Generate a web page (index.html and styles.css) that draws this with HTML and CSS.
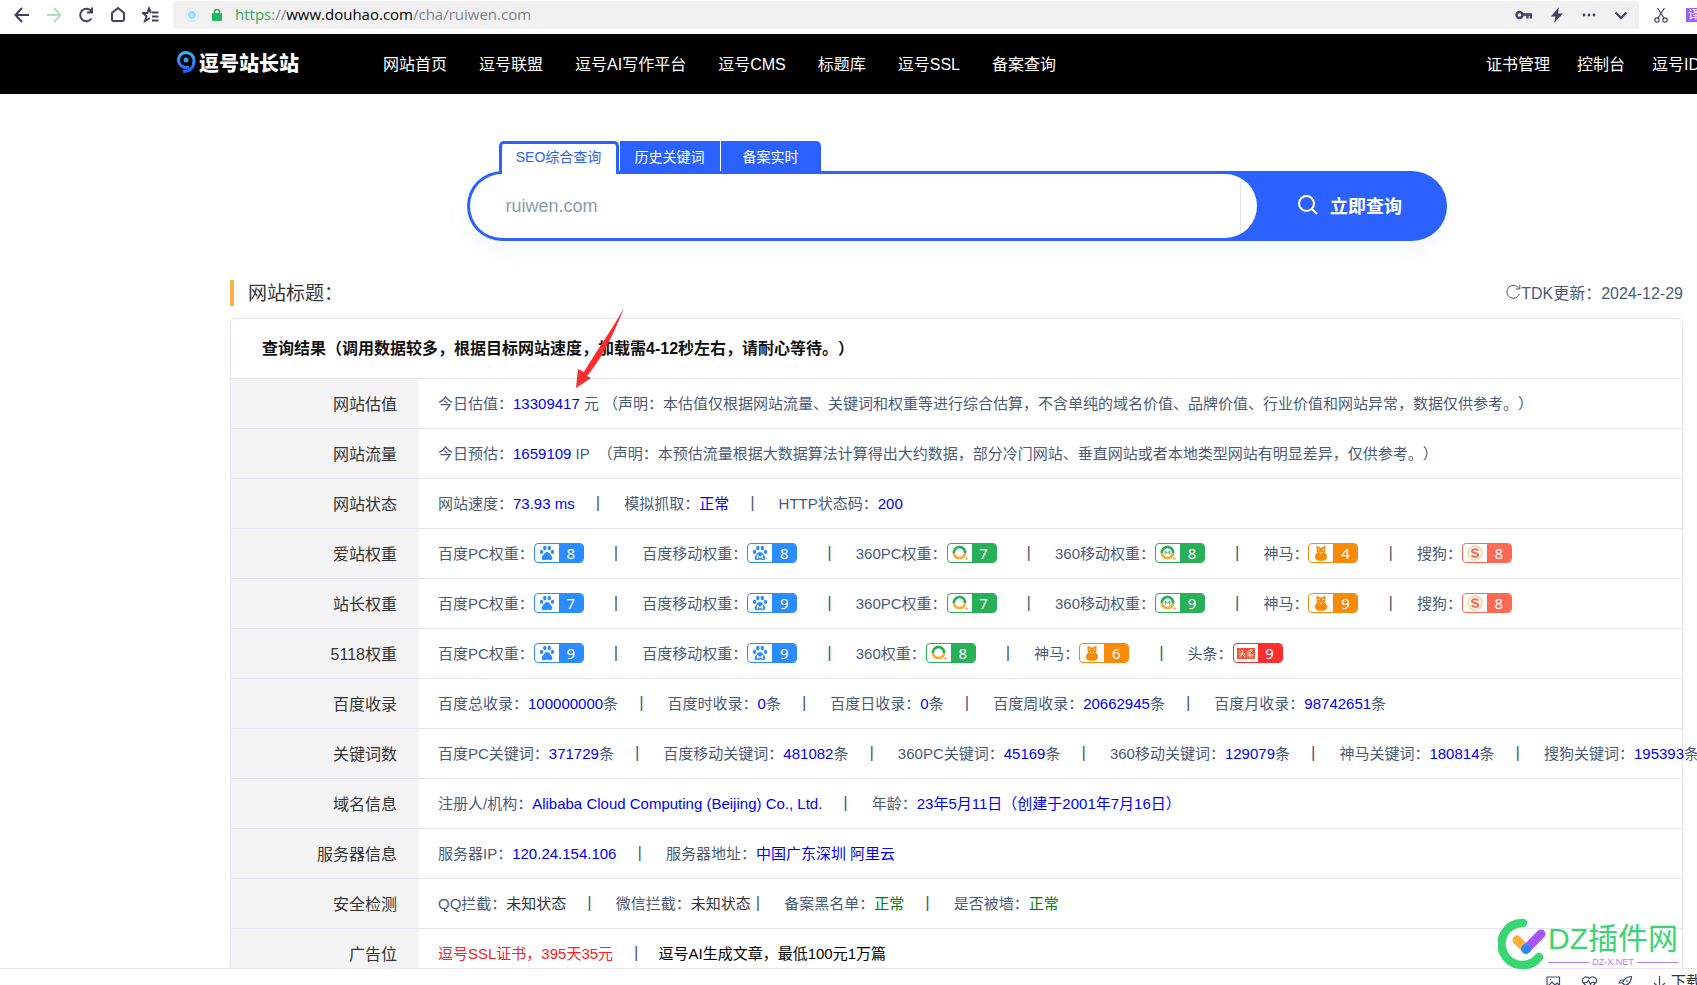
FILE: index.html
```html
<!DOCTYPE html>
<html lang="zh-CN">
<head>
<meta charset="utf-8">
<title>ruiwen.com - 逗号站长站</title>
<link rel="stylesheet" href="styles.css">
</head>
<body>
<svg class="defs" aria-hidden="true">
  <symbol id="paw" viewBox="0 0 16 16"><ellipse cx="2.6" cy="6.9" rx="1.7" ry="2.1"/><ellipse cx="5.8" cy="3.1" rx="1.7" ry="2.4"/><ellipse cx="10.3" cy="3.1" rx="1.7" ry="2.4"/><ellipse cx="13.5" cy="6.9" rx="1.7" ry="2.1"/><path d="M8 7c2 0 2.6 1.800 4 3.200 2.400 2.300 1.300 5-1 5-1.200 0-1.800-.4-3-.4s-1.800.4-3 .4c-2.300 0-3.400-2.700-1-5C5.400 8.800 6 7 8 7z"/></symbol>
  <symbol id="pawm" viewBox="0 0 16 16"><use href="#paw"/><path d="M5.500 14v-3.200l2.500 2 2.500-2V14" fill="none" stroke="#fff" stroke-width="1.200"/></symbol>
  <symbol id="so" viewBox="0 0 16 16"><path d="M2 8.500A5.600 5.600 0 1 1 13 8.500" fill="none" stroke="#27b058" stroke-width="2.600"/><path d="M2 8.500A5.600 5.600 0 0 0 13 8.500" fill="none" stroke="#f9ab3c" stroke-width="2.600"/><circle cx="14.500" cy="13.500" r="1.200" fill="#f9ab3c"/></symbol>
  <symbol id="som" viewBox="0 0 16 16"><use href="#so"/><path d="M5.300 9.500V6L7.500 8.200 9.700 6v3.500" fill="none" stroke="#27b058" stroke-width="1"/></symbol>
  <symbol id="owl" viewBox="0 0 16 16"><path d="M3.500.5 7 2.500h2L12.500.5V5c0 1-.5 2-1.300 2.500 2 1 2.800 2.500 2.800 4.200 0 2-1.500 3.800-3.500 4H5.500c-2-.2-3.500-2-3.500-4C2 10 2.800 8.500 4.800 7.500 4 7 3.500 6 3.500 5z"/><path d="m4.800 4 2 1M11.200 4l-2 1M6.500 7.500 8 8.800l1.500-1.300" stroke="#fff" fill="none"/></symbol>
  <symbol id="sogou" viewBox="0 0 16 16"><circle cx="8" cy="8" r="7" fill="none" stroke="#fbd9ac" stroke-width="1.800"/><path d="M11.400 5.600C10.500 4 5 3.600 5 6.200c0 2.300 6.200 1.200 6.200 3.700 0 2.600-5.700 2.200-6.600.4" fill="none" stroke="#fb6a55" stroke-width="2"/></symbol>
  <symbol id="toutiao" viewBox="0 0 18 16"><path d="M0 3h18v11H0z" fill="#f5533d"/><path d="M2 6l1.500 1M1.800 9h6.500M5.500 5v4l-3 3M6 10l2 2M10.500 7l2-2h3l-2.500 3H10M10 10h6.500M13 8.500V13M11 11.500l-1 1M15 11.500l1 1" stroke="#ffe9cf" fill="none"/></symbol>
</svg>

<div class="toolbar">
  <div class="tools">
    <svg width="16" height="18" viewBox="0 0 16 18"><path d="M15 9H2M8 2 1.500 9 8 16"/></svg>
    <svg class="muted" width="16" height="18" viewBox="0 0 16 18"><path d="M1 9h13M8 2l6.500 7L8 16"/></svg>
    <svg width="16" height="18" viewBox="0 0 16 18"><path d="M13.500 12.500A6.200 6.200 0 1 1 13.300 5.200M14 1.500v5H9"/></svg>
    <svg width="16" height="18" viewBox="0 0 16 18"><path d="M2 13.500V7L8 2l6 5v6.500a1.500 1.500 0 0 1-1.500 1.500h-9A1.500 1.500 0 0 1 2 13.500z"/></svg>
    <svg width="17" height="18" viewBox="0 0 17 18"><path d="M10 6.500h6.500M10 10.500h6.500M10 14.500h6.500"/><path d="M9 7 7 2.500 5.300 7H1l3.500 3.300L3 15l5-3"/></svg>
  </div>
  <div class="address">
    <svg class="plain" width="14" height="16" viewBox="0 0 14 16"><circle cx="7" cy="8" r="6" fill="none" stroke="#c3e8fc" stroke-width="1" stroke-dasharray="5 1"/><circle cx="7" cy="8" r="4" fill="#a6dcfc"/></svg>
    <svg class="plain" width="12" height="14" viewBox="0 0 12 14"><path d="M3.500 6V4a2.500 2.500 0 0 1 5 0v2" fill="none" stroke="#21b65b" stroke-width="1.500"/><rect x="1" y="5" width="10" height="8" rx="1" fill="#21b65b"/></svg>
    <div class="url"><span class="scheme">https</span>://<b>www.douhao.com</b>/cha/ruiwen.com</div>
    <div class="address-icons">
      <svg width="17" height="16" viewBox="0 0 17 16"><g stroke-width="2.400"><circle cx="4.500" cy="8" r="3"/><path d="M8 7.500h8v4M12.500 8v3.500"/></g></svg>
      <svg width="14" height="18" viewBox="0 0 14 18"><path d="M9 1 1 10.500h4.500L4 17l9-9.500H8z" fill="#3f4065" stroke="none"/></svg>
      <svg width="14" height="16" viewBox="0 0 14 16"><g fill="#3f4065" stroke="none"><circle cx="2" cy="8" r="1.400"/><circle cx="7" cy="8" r="1.400"/><circle cx="12" cy="8" r="1.400"/></g></svg>
      <svg width="14" height="16" viewBox="0 0 14 16"><path d="m1.500 5.500 5.500 5.500 5.500-5.500"/></svg>
    </div>
  </div>
  <div class="extras">
    <svg width="16" height="18" viewBox="0 0 16 18"><g stroke-width="1.200"><circle cx="4" cy="14" r="2.200"/><circle cx="12" cy="14" r="2.200"/><path d="M5 12 11.500 2M11 12 4.500 2"/></g></svg>
    <span class="translate">译</span>
  </div>
</div>

<header class="site-header">
  <a class="logo" href="#">
    <svg width="19" height="23" viewBox="0 0 19 23"><defs><linearGradient id="lg" x1="0" y1="0" x2="0" y2="1"><stop offset="0" stop-color="#37b6f5"/><stop offset="1" stop-color="#2a5cff"/></linearGradient></defs><path d="M9 1.500a7.500 7.500 0 1 0 3 14.400M9 1.500a8 8 0 0 1 8 8c0 7-4 11-11 11" fill="none" stroke="url(#lg)" stroke-width="3"/><circle cx="9" cy="9" r="2.500" fill="#2fa1fa"/></svg>
    <span>逗号站长站</span>
  </a>
  <nav class="nav">
    <a href="#">网站首页</a><a href="#">逗号联盟</a><a href="#">逗号AI写作平台</a><a href="#">逗号CMS</a><a href="#">标题库</a><a href="#">逗号SSL</a><a href="#">备案查询</a>
  </nav>
  <nav class="account"><a href="#">证书管理</a><a href="#">控制台</a><a href="#">逗号ID</a></nav>
</header>

<main class="main">
  <form class="search">
    <div class="tabs">
      <button type="button" class="tab active">SEO综合查询</button><button type="button" class="tab">历史关键词</button><button type="button" class="tab">备案实时</button>
    </div>
    <div class="search-box">
      <div class="field"><input type="text" value="ruiwen.com" aria-label="域名"></div>
      <button type="submit" class="submit"><svg width="20" height="20" viewBox="0 0 20 20"><circle cx="8.500" cy="8.500" r="7.500" fill="none" stroke="#fff" stroke-width="2"/><path d="m14 14 5 5" stroke="#fff" stroke-width="2"/></svg>立即查询</button>
    </div>
  </form>

  <div class="title-row">
    <h1>网站标题：</h1>
    <div class="updated"><svg width="15" height="16" viewBox="0 0 15 16"><path d="M13.500 10A6.500 6.500 0 1 1 13 4.500M13.800 1v4H10" fill="none" stroke="#4a5b78"/></svg>TDK更新：2024-12-29</div>
  </div>

  <section class="result">
    <h2>查询结果（调用数据较多，根据目标网站速度，加载需4-12秒左右，请耐心等待。）</h2>
    <table>
      <tr><th scope="row">网站估值</th><td><div class="line"><span>今日估值：<b>13309417</b> 元 （声明：本估值仅根据网站流量、关键词和权重等进行综合估算，不含单纯的域名价值、品牌价值、行业价值和网站异常，数据仅供参考。）</span></div></td></tr>
      <tr><th scope="row">网站流量</th><td><div class="line"><span>今日预估：<b>1659109</b> IP &nbsp;（声明：本预估流量根据大数据算法计算得出大约数据，部分冷门网站、垂直网站或者本地类型网站有明显差异，仅供参考。）</span></div></td></tr>
      <tr><th scope="row">网站状态</th><td><div class="line"><span>网站速度：<b>73.93 ms</b></span><i>|</i><span>模拟抓取：<b>正常</b></span><i>|</i><span>HTTP状态码：<b>200</b></span></div></td></tr>
      <tr><th scope="row">爱站权重</th><td><div class="line ranks"><span>百度PC权重：</span><span class="badge blue"><svg><use href="#paw"/></svg><em>8</em></span><i>|</i><span>百度移动权重：</span><span class="badge blue"><svg><use href="#pawm"/></svg><em>8</em></span><i>|</i><span>360PC权重：</span><span class="badge green"><svg><use href="#so"/></svg><em>7</em></span><i>|</i><span>360移动权重：</span><span class="badge green"><svg><use href="#som"/></svg><em>8</em></span><i>|</i><span>神马：</span><span class="badge orange"><svg><use href="#owl"/></svg><em>4</em></span><i>|</i><span>搜狗：</span><span class="badge coral"><svg><use href="#sogou"/></svg><em>8</em></span></div></td></tr>
      <tr><th scope="row">站长权重</th><td><div class="line ranks"><span>百度PC权重：</span><span class="badge blue"><svg><use href="#paw"/></svg><em>7</em></span><i>|</i><span>百度移动权重：</span><span class="badge blue"><svg><use href="#pawm"/></svg><em>9</em></span><i>|</i><span>360PC权重：</span><span class="badge green"><svg><use href="#so"/></svg><em>7</em></span><i>|</i><span>360移动权重：</span><span class="badge green"><svg><use href="#som"/></svg><em>9</em></span><i>|</i><span>神马：</span><span class="badge orange"><svg><use href="#owl"/></svg><em>9</em></span><i>|</i><span>搜狗：</span><span class="badge coral"><svg><use href="#sogou"/></svg><em>8</em></span></div></td></tr>
      <tr><th scope="row">5118权重</th><td><div class="line ranks"><span>百度PC权重：</span><span class="badge blue"><svg><use href="#paw"/></svg><em>9</em></span><i>|</i><span>百度移动权重：</span><span class="badge blue"><svg><use href="#pawm"/></svg><em>9</em></span><i>|</i><span>360权重：</span><span class="badge green"><svg><use href="#so"/></svg><em>8</em></span><i>|</i><span>神马：</span><span class="badge orange"><svg><use href="#owl"/></svg><em>6</em></span><i>|</i><span>头条：</span><span class="badge red"><svg><use href="#toutiao"/></svg><em>9</em></span></div></td></tr>
      <tr><th scope="row">百度收录</th><td><div class="line"><span>百度总收录：<b>100000000</b>条</span><i>|</i><span>百度时收录：<b>0</b>条</span><i>|</i><span>百度日收录：<b>0</b>条</span><i>|</i><span>百度周收录：<b>20662945</b>条</span><i>|</i><span>百度月收录：<b>98742651</b>条</span></div></td></tr>
      <tr><th scope="row">关键词数</th><td><div class="line"><span>百度PC关键词：<b>371729</b>条</span><i>|</i><span>百度移动关键词：<b>481082</b>条</span><i>|</i><span>360PC关键词：<b>45169</b>条</span><i>|</i><span>360移动关键词：<b>129079</b>条</span><i>|</i><span>神马关键词：<b>180814</b>条</span><i>|</i><span>搜狗关键词：<b>195393</b>条</span></div></td></tr>
      <tr><th scope="row">域名信息</th><td><div class="line"><span>注册人/机构：<b>Alibaba Cloud Computing (Beijing) Co., Ltd.</b></span><i>|</i><span>年龄：<b>23年5月11日（创建于2001年7月16日）</b></span></div></td></tr>
      <tr><th scope="row">服务器信息</th><td><div class="line"><span>服务器IP：<b>120.24.154.106</b></span><i>|</i><span>服务器地址：<b>中国广东深圳 阿里云</b></span></div></td></tr>
      <tr><th scope="row">安全检测</th><td><div class="line"><span>QQ拦截：<b class="unknown">未知状态</b></span><i>|</i><span>微信拦截：<b class="unknown">未知状态</b></span><i class="tight">|</i><span>备案黑名单：<b class="ok">正常</b></span><i>|</i><span>是否被墙：<b class="ok">正常</b></span></div></td></tr>
      <tr><th scope="row">广告位</th><td><div class="line ads"><a class="hot" href="#">逗号SSL证书，395天35元</a><i>|</i><a href="#">逗号AI生成文章，最低100元1万篇</a></div></td></tr>
    </table>
  </section>
</main>

<footer class="statusbar">
  <svg width="15" height="15" viewBox="0 0 15 15"><path d="M1 13V2h12.500v11zM2 11l4-4 3 3 2-2 3 3M4 4.500h1"/></svg>
  <svg width="17" height="15" viewBox="0 0 17 15"><path d="M8.500 14 2 7.500C-.5 3.500 5 0 8.500 3.500 12 0 17.500 3.500 15 7.500zM2 7.500h4l1.500-2 2 4 1.500-2h4"/></svg>
  <svg width="15" height="15" viewBox="0 0 15 15"><path d="M13.500 1.500C9 1.500 6 4 4.500 8L7 10.500c4-1.500 6.500-4.500 6.500-9zM6 5H3L1 8h3M10 9v3l-3 2v-3M4 11l-2.500 2.500M8.500 5.500l1 1"/></svg>
  <svg width="13" height="15" viewBox="0 0 13 15"><path d="M6.500 1v12M1 8l5.500 5L12 8"/></svg>
  <span>下载</span>
</footer>

<svg class="arrow" width="50" height="82" viewBox="0 0 50 82"><path d="M49 0C38 20 22 42 9 64l-6-3L1 80l15-10-4-2C22 56 34 38 49 0z" fill="#fb2c2c"/></svg>

<div class="watermark">
  <svg width="50" height="52" viewBox="0 0 50 52"><path d="M25 5A21 21 0 1 0 41 39" fill="none" stroke="#39d573" stroke-width="8.500" stroke-linecap="round"/><path d="m19 22 9 9" stroke="#fbb040" stroke-width="9" stroke-linecap="round"/><path d="M28 31 43 16" stroke="#a855f7" stroke-width="9" stroke-linecap="round"/><circle cx="28" cy="31" r="5" fill="#2e8bff"/></svg>
  <div class="wm-text"><strong>DZ插件网</strong><small>DZ-X.NET</small></div>
</div>
</body>
</html>
```
FILE: styles.css
```css
* { box-sizing: border-box; }
body {
  margin: 0;
  height: 100vh;
  display: flex;
  flex-direction: column;
  overflow: hidden;
  position: relative;
  background: #fff;
  color: #4a5b78;
  font-family: "Liberation Sans", "Noto Sans CJK SC", sans-serif;
  font-size: 15px;
  white-space: nowrap;
  text-spacing-trim: space-all;
}
a { color: inherit; text-decoration: none; }
button, input { font: inherit; border: 0; padding: 0; }
svg { flex: none; display: block; }
.defs { position: absolute; width: 0; height: 0; }

.toolbar { flex: none; height: 34px; display: flex; padding: 1px 0 5px 14px; }
.toolbar svg { fill: none; stroke: #3f4065; stroke-width: 2; }
.toolbar .plain { stroke: none; }
.tools { display: flex; align-items: center; gap: 16px; width: 159px; }
.toolbar .muted { stroke: #b3dcc0; }
.address { flex: 1; display: flex; align-items: center; gap: 12px; padding: 0 11px 0 12px; background: #f1f1f1; border-radius: 4px; }
.url { font-family: "Open Sans", sans-serif; font-size: 15px; line-height: 26px; padding-bottom: 2px; color: #7d8590; }
.url b { font-weight: 400; color: #000; }
.url .scheme { color: #3aa860; }
.address-icons { display: flex; align-items: center; gap: 18px; margin-left: auto; }
.extras { display: flex; align-items: center; gap: 17px; width: 58px; padding-left: 14px; overflow: hidden; }
.translate { flex: none; width: 16px; background: #a05cff; color: #fff; font-size: 12px; line-height: 14px; padding-left: 2px; }

.site-header { flex: none; height: 60px; display: flex; align-items: center; padding: 0 0 3px 177px; background: #000; color: #fff; font-size: 16px; }
.logo { display: flex; align-items: center; gap: 3px; width: 206px; font-family: "Noto Sans CJK SC", sans-serif; font-size: 20px; font-weight: 900; }
.nav { display: flex; gap: 32px; }
.account { display: flex; gap: 27px; margin-left: auto; margin-right: -3px; }

.main { flex: 1; min-height: 0; overflow: hidden; padding: 47px 14px 0 230px; }
.search { width: 980px; margin: 0 auto; }
.tabs { display: flex; gap: 1px; padding-left: 32px; }
.tab { height: 30px; min-width: 100px; background: #2b62ff; color: #fff; font-size: 14px; }
.tab:last-child { border-radius: 0 5px 0 0; }
.tab.active { position: relative; width: 120px; height: 33px; margin-bottom: -3px; padding-bottom: 6px; background: #fff; color: #2b62ff; border: 3px solid #2b62ff; border-bottom: 0; border-radius: 5px 5px 0 0; }
.search-box { display: flex; height: 70px; padding: 3px 0 3px 3px; border-radius: 35px; background: #2b62ff; box-shadow: 0 12px 24px rgba(60, 150, 255, .06); }
.field { flex: 1; display: flex; align-items: center; background: #fff; border-radius: 32px; padding: 0 16px 0 36px; }
.field input { flex: 1; height: 50px; font-size: 18px; color: #8a9ca6; background: none; border-right: 1px solid #e4e6ea; outline: 0; }
.submit { width: 190px; display: flex; align-items: center; justify-content: center; gap: 12px; padding: 0 3px 2px 0; background: none; color: #fff; font-size: 18px; font-weight: 700; }

.title-row { display: flex; justify-content: space-between; align-items: center; margin: 39px 0 12px; }
.title-row h1 { margin: 0; padding: 2px 0 0 14px; border-left: 4px solid #f9b344; font-size: 19px; line-height: 24px; font-weight: 400; color: #333; }
.updated { display: flex; align-items: center; padding-bottom: 2px; font-size: 16px; }

.result { border: 1px solid #e1e7ed; border-radius: 6px; }
.result h2 { margin: 0; padding-left: 31px; font-size: 16px; line-height: 59px; font-weight: 700; color: #111; }
table { width: 100%; table-layout: fixed; border-spacing: 0; }
th, td { height: 50px; padding: 0 0 2px; border-top: 1px solid #e1e7ed; }
th { width: 188px; padding-right: 22px; background: #f4f4f4; color: #333; font-size: 16px; font-weight: 400; text-align: right; }
td { padding-left: 19px; }
.line { display: flex; align-items: center; }
.line b { font-weight: 400; color: #00f; }
.line i { font-style: normal; font-size: 17px; line-height: 20px; margin: 0 24px 0 21px; }
.line .tight { margin-left: 5px; }
.line.ranks i { margin-left: 30px; }
.line .unknown { color: #333; }
.line .ok { color: #008000; }
.ads { color: #000; }
.line.ads i { color: #4a5b78; margin-right: 20px; }
.ads .hot { color: #ff2020; }

.badge { display: flex; width: 50px; height: 20px; border: 1px solid; border-radius: 4px; overflow: hidden; }
.badge svg { width: 24px; height: 18px; padding: 1px 3px; fill: currentColor; }
.badge em { flex: 1; text-align: center; font: 15px/18px "Noto Sans", sans-serif; background: currentColor; }
.badge em::first-letter { color: #fff; }
.blue { color: #2b8cff; }
.green { color: #27b058; }
.orange { color: #f78a08; }
.coral { color: #fb6a55; }
.red { color: #f83030; }

.statusbar { flex: none; height: 17px; display: flex; justify-content: flex-end; gap: 20px; padding-top: 6px; overflow: hidden; border-top: 1px solid #e8eaed; background: #fff; color: #333; line-height: 20px; }
.statusbar svg { fill: none; stroke: #3f4b6b; stroke-width: 1.2; }
.statusbar span { margin: -3px -4px 0 -15px; }

.arrow { position: absolute; left: 575px; top: 308px; }
.watermark { position: absolute; right: 19px; bottom: 15px; display: flex; align-items: center; }
.wm-text { display: flex; flex-direction: column; color: #39d573; }
.wm-text strong { font-size: 30px; line-height: 36px; font-weight: 400; }
.wm-text small { display: flex; align-items: center; gap: 3px; font-size: 9px; line-height: 10px; color: #b77cf8; }
.wm-text small::before, .wm-text small::after { content: ""; flex: 1; height: 1px; background: #b77cf8; }
```
